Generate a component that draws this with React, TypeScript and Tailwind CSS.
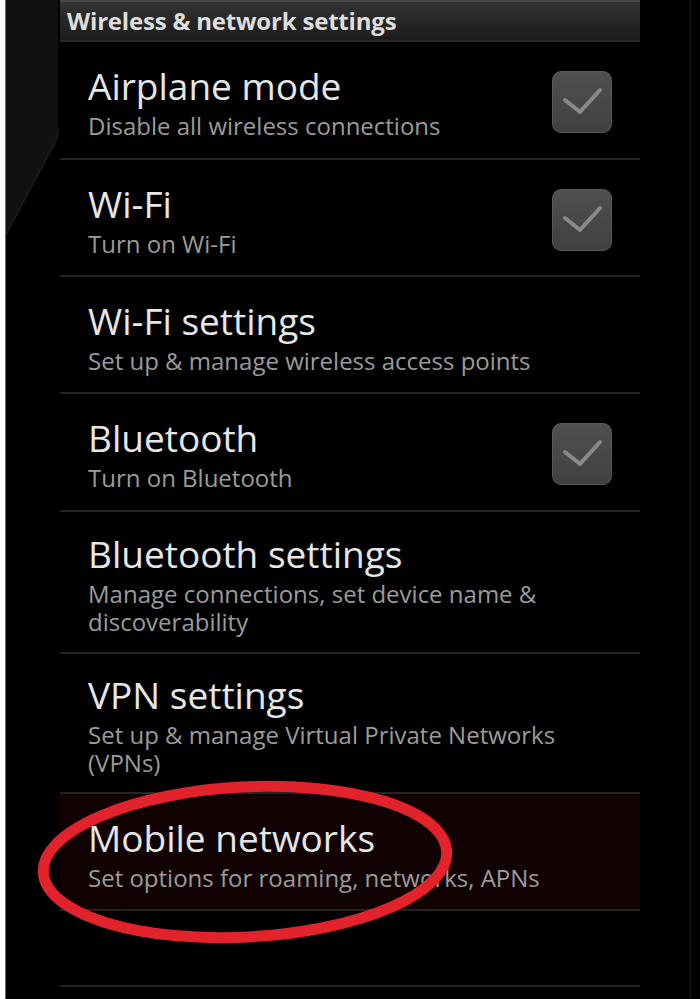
import React from 'react';

type Pref = {
  title: string;
  lines: string[];
  height: string;
  checked?: boolean;
  highlight?: boolean;
};

const prefs: Pref[] = [
  { title: 'Airplane mode', lines: ['Disable all wireless connections'], height: 'h-[118px]', checked: true },
  { title: 'Wi-Fi', lines: ['Turn on Wi-Fi'], height: 'h-[117px]', checked: true },
  { title: 'Wi-Fi settings', lines: ['Set up & manage wireless access points'], height: 'h-[117px]' },
  { title: 'Bluetooth', lines: ['Turn on Bluetooth'], height: 'h-[118px]', checked: true },
  {
    title: 'Bluetooth settings',
    lines: ['Manage connections, set device name &', 'discoverability'],
    height: 'h-[142px]',
  },
  {
    title: 'VPN settings',
    lines: ['Set up & manage Virtual Private Networks', '(VPNs)'],
    height: 'h-[140px]',
  },
  {
    title: 'Mobile networks',
    lines: ['Set options for roaming, networks, APNs'],
    height: 'h-[117px]',
    highlight: true,
  },
];

function CheckBox() {
  return (
    <span className="grid h-[62px] w-[60px] shrink-0 place-items-center rounded-[9px] border border-[#585858] bg-gradient-to-b from-[#505050] to-[#404040]">
      <svg width="60" height="62" viewBox="0 0 60 62" aria-hidden="true">
        <path
          d="M12 28 L27 40 L47 18"
          fill="none"
          stroke="#8a8a8a"
          strokeWidth="4"
          strokeLinecap="round"
          strokeLinejoin="round"
        />
      </svg>
    </span>
  );
}

function PrefRow({ pref }: { pref: Pref }) {
  return (
    <div
      className={`flex ${pref.height} items-center border-b-2 border-[#242424] pl-[28px] pr-[28px] pt-[4px] ${
        pref.highlight ? 'bg-[#110303]' : ''
      }`}
    >
      <div className="min-w-0 flex-1">
        <div className="whitespace-nowrap text-[37px] leading-[44px] text-[#e6e6e6]">{pref.title}</div>
        <div className="mt-[4px] text-[24px] leading-[28px] text-[#9b9b9b]">
          {pref.lines.map((line) => (
            <div key={line} className="whitespace-nowrap">
              {line}
            </div>
          ))}
        </div>
      </div>
      {pref.checked && <CheckBox />}
    </div>
  );
}

export default function App() {
  return (
    <div className="relative flex h-[999px] w-[700px] overflow-hidden bg-black font-['Open_Sans',sans-serif]">
      <div className="w-[5px] shrink-0 bg-white" />
      <div className="w-px shrink-0 bg-[#6a6a6a]" />

      {/* dark edge of the phone panel */}
      <div className="w-[54px] shrink-0">
        <svg width="54" height="240" viewBox="0 0 54 240" aria-hidden="true">
          <path d="M0 0 H52 V128 Q52 140 46 148 L0 234 Z" fill="#111111" />
          <path d="M52 128 Q52 140 46 148 L0 234" fill="none" stroke="#191919" strokeWidth="2" />
        </svg>
      </div>

      <div className="w-[580px] shrink-0">
        <div className="h-[42px] border-b-2 border-[#2a2a2a]">
          <div className="flex h-full items-center border-t-2 border-[#474747] bg-gradient-to-b from-[#343434] via-[#262626] to-[#1c1c1c] pl-[7px] text-[24px] font-bold tracking-[-0.2px] text-[#dedede]">
            Wireless &amp; network settings
          </div>
        </div>

        {prefs.map((pref) => (
          <PrefRow key={pref.title} pref={pref} />
        ))}

        <div className="h-[76px] border-b-2 border-[#242424]" />
      </div>

      <div className="flex flex-1 justify-end pr-[9px]">
        <div className="w-px bg-[#151515]" />
      </div>

      {/* red annotation circle around "Mobile networks" */}
      <svg
        className="pointer-events-none absolute left-[30px] top-[775px]"
        width="430"
        height="175"
        viewBox="0 0 430 175"
        aria-hidden="true"
      >
        <ellipse
          cx="215"
          cy="87"
          rx="202"
          ry="75"
          transform="rotate(-3 215 87)"
          fill="none"
          stroke="#e3232b"
          strokeWidth="11"
        />
      </svg>
    </div>
  );
}
